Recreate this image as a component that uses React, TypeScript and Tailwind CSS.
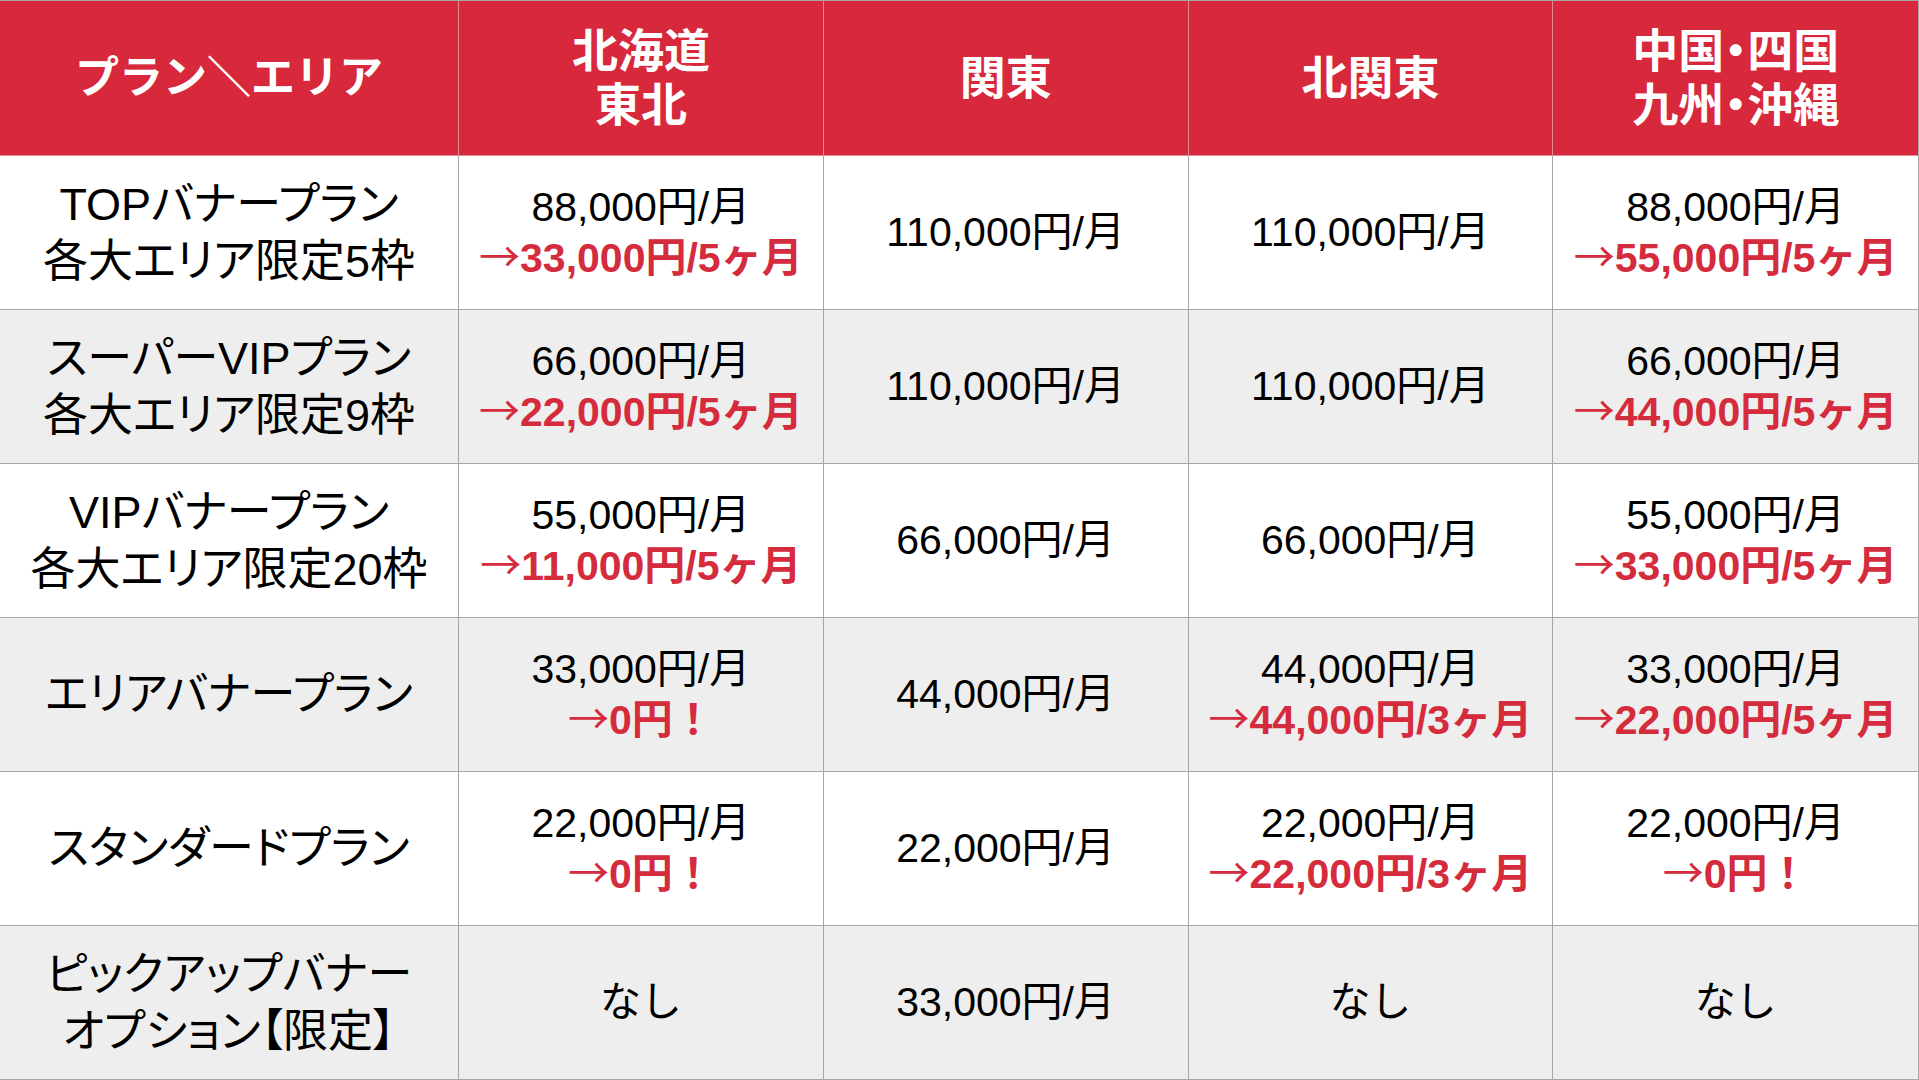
type Cell = { base: string; sale?: string };

const areas = ['北海道\n東北', '関東', '北関東', '中国・四国\n九州・沖縄'];

const plans: { name: string; cells: Cell[] }[] = [
  {
    name: 'TOPバナープラン\n各大エリア限定5枠',
    cells: [
      { base: '88,000円/月', sale: '→33,000円/5ヶ月' },
      { base: '110,000円/月' },
      { base: '110,000円/月' },
      { base: '88,000円/月', sale: '→55,000円/5ヶ月' },
    ],
  },
  {
    name: 'スーパーVIPプラン\n各大エリア限定9枠',
    cells: [
      { base: '66,000円/月', sale: '→22,000円/5ヶ月' },
      { base: '110,000円/月' },
      { base: '110,000円/月' },
      { base: '66,000円/月', sale: '→44,000円/5ヶ月' },
    ],
  },
  {
    name: 'VIPバナープラン\n各大エリア限定20枠',
    cells: [
      { base: '55,000円/月', sale: '→11,000円/5ヶ月' },
      { base: '66,000円/月' },
      { base: '66,000円/月' },
      { base: '55,000円/月', sale: '→33,000円/5ヶ月' },
    ],
  },
  {
    name: 'エリアバナープラン',
    cells: [
      { base: '33,000円/月', sale: '→0円！' },
      { base: '44,000円/月' },
      { base: '44,000円/月', sale: '→44,000円/3ヶ月' },
      { base: '33,000円/月', sale: '→22,000円/5ヶ月' },
    ],
  },
  {
    name: 'スタンダードプラン',
    cells: [
      { base: '22,000円/月', sale: '→0円！' },
      { base: '22,000円/月' },
      { base: '22,000円/月', sale: '→22,000円/3ヶ月' },
      { base: '22,000円/月', sale: '→0円！' },
    ],
  },
  {
    name: 'ピックアップバナー\nオプション【限定】',
    cells: [{ base: 'なし' }, { base: '33,000円/月' }, { base: 'なし' }, { base: 'なし' }],
  },
];

const font = { fontFamily: '"Liberation Sans", "Noto Sans CJK JP", sans-serif' };

export default function App() {
  return (
    <div
      className="grid h-[1080px] w-[1919px] grid-cols-[459px_repeat(4,1fr)] grid-rows-[155px_repeat(6,1fr)] overflow-hidden border-t border-r border-[#a6a6a6] bg-white text-black"
      style={font}
    >
      <div className="flex items-center justify-center border-r border-b border-[#e58a94] bg-[#d7293b] text-[44px] font-bold text-white">
        プラン＼エリア
      </div>
      {areas.map((a, i) => (
        <div
          key={a}
          className={`flex items-center justify-center whitespace-pre-line border-b border-[#e58a94] bg-[#d7293b] text-center text-[46px] leading-[54px] font-bold text-white [font-feature-settings:'palt'] ${
            i < areas.length - 1 ? 'border-r' : ''
          }`}
        >
          {a}
        </div>
      ))}

      {plans.map((p, r) => {
        const bg = r % 2 === 0 ? 'bg-white' : 'bg-[#eeeeee]';
        return (
          <div key={p.name} className="contents">
            <div
              className={`flex items-center justify-center whitespace-pre-line border-r border-b border-[#a6a6a6] text-center text-[45px] leading-[57px] [font-feature-settings:'palt'] ${bg}`}
            >
              {p.name}
            </div>
            {p.cells.map((c, i) => (
              <div
                key={i}
                className={`flex flex-col items-center justify-center border-b border-[#a6a6a6] text-center text-[41px] leading-[51px] ${bg} ${
                  i < 3 ? 'border-r' : ''
                }`}
              >
                <span>{c.base}</span>
                {c.sale && (
                  <span className="font-bold text-[#d42b3d]">
                    <span className="inline-block h-[41px] font-normal leading-[41px] [font-family:'Noto_Sans_CJK_JP',sans-serif]">
                      {c.sale.slice(0, 1)}
                    </span>
                    {c.sale.slice(1)}
                  </span>
                )}
              </div>
            ))}
          </div>
        );
      })}
    </div>
  );
}
